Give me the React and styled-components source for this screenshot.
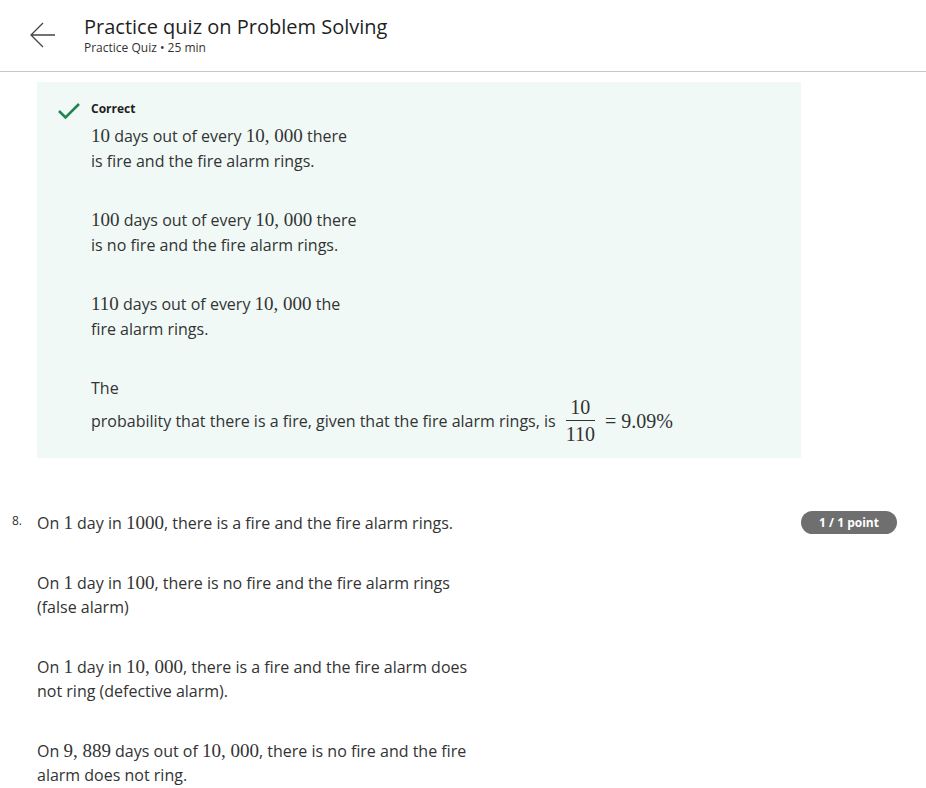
import React from 'react';
import styled, { createGlobalStyle } from 'styled-components';

const GlobalStyle = createGlobalStyle`
  body {
    margin: 0;
    background: #fff;
    font-family: "Open Sans", "Liberation Sans", sans-serif;
    color: #333;
  }
`;

const Header = styled.header`
  display: flex;
  align-items: center;
  height: 71px;
  border-bottom: 1px solid #c7c7c7;
  padding-left: 29px;
`;

const BackButton = styled.button`
  display: flex;
  align-items: center;
  justify-content: center;
  width: 28px;
  height: 28px;
  padding: 0;
  margin-top: -2px;
  border: none;
  background: none;
  cursor: pointer;
`;

const TitleBlock = styled.div`
  margin-left: 27px;
  margin-top: -3px;
`;

const Title = styled.h1`
  margin: 0;
  font-size: 20px;
  font-weight: 400;
  line-height: 28px;
  color: #1f1f1f;
`;

const Subtitle = styled.div`
  font-size: 12px;
  line-height: 16px;
  margin-top: -1px;
  color: #333;
`;

const Main = styled.main`
  padding: 10px 29px 0 12px;
`;

const Feedback = styled.section`
  display: flex;
  margin-left: 25px;
  width: 764px;
  box-sizing: border-box;
  padding: 19px 20px 13px 20px;
  background: #f0f9f6;
`;

const IconCol = styled.div`
  width: 34px;
  flex: none;
`;

const Body = styled.div`
  flex: 1;
`;

const Label = styled.div`
  font-size: 12px;
  font-weight: 700;
  line-height: 16px;
  margin-bottom: 7px;
  color: #1f1f1f;
`;

const Para = styled.p`
  margin: 0 0 ${({ gap }) => gap ?? 34}px;
  font-size: 16px;
  line-height: ${({ lh }) => lh ?? 25}px;
  width: ${({ width }) => width || 'auto'};
`;

const M = styled.span`
  font-family: "Liberation Serif", "DejaVu Serif", serif;
  font-size: ${({ size }) => size || 19}px;
  line-height: 1;
`;

const FracLine = styled.div`
  display: flex;
  align-items: center;
  margin-top: -4px;
  font-size: 16px;
  line-height: 24px;
`;

const Frac = styled.span`
  display: inline-flex;
  flex-direction: column;
  align-items: center;
  margin: 0 10px;
  font-family: "Liberation Serif", "DejaVu Serif", serif;
  font-size: 20px;
  line-height: 21px;
`;

const Num = styled.span`
  padding: 0 2px 2px;
  border-bottom: 1px solid #333;
  align-self: stretch;
  text-align: center;
`;

const Den = styled.span`
  padding-top: 3px;
`;

const Question = styled.div`
  display: grid;
  grid-template-columns: 25px 1fr auto;
  margin-top: 53px;
`;

const QNum = styled.div`
  font-size: 12px;
  line-height: 24px;
  margin-top: -2px;
`;

const Badge = styled.span`
  align-self: start;
  display: inline-flex;
  align-items: center;
  justify-content: center;
  width: 96px;
  height: 23px;
  border-radius: 12px;
  background: #6f6f6f;
  color: #fff;
  font-size: 12px;
  font-weight: 700;
`;

const Arrow = () => (
  <svg width="28" height="28" viewBox="0 0 28 28" fill="none" stroke="#444" strokeWidth="1.3">
    <path d="M26 14H3M14 2L2 14l12 12" />
  </svg>
);

const Check = () => (
  <svg width="24" height="20" viewBox="0 0 24 20" fill="none" stroke="#1f8354" strokeWidth="2.6">
    <path d="M2 10l6.5 6.5L22 3" />
  </svg>
);

const App = () => (
  <>
    <GlobalStyle />
    <Header>
      <BackButton aria-label="Back">
        <Arrow />
      </BackButton>
      <TitleBlock>
        <Title>Practice quiz on Problem Solving</Title>
        <Subtitle>Practice Quiz • 25 min</Subtitle>
      </TitleBlock>
    </Header>
    <Main>
      <Feedback>
        <IconCol>
          <Check />
        </IconCol>
        <Body>
          <Label>Correct</Label>
          <Para width="265px">
            <M>10</M> days out of every <M>10, 000</M> there is fire and the fire alarm rings.
          </Para>
          <Para width="275px">
            <M>100</M> days out of every <M>10, 000</M> there is no fire and the fire alarm rings.
          </Para>
          <Para width="260px">
            <M>110</M> days out of every <M>10, 000</M> the fire alarm rings.
          </Para>
          <Para gap={0}>The</Para>
          <FracLine>
            probability that there is a fire, given that the fire alarm rings, is
            <Frac>
              <Num>10</Num>
              <Den>110</Den>
            </Frac>
            <M size={20}>= 9.09%</M>
          </FracLine>
        </Body>
      </Feedback>
      <Question>
        <QNum>8.</QNum>
        <div>
          <Para lh={24} gap={36}>
            On <M>1</M> day in <M>1000</M>, there is a fire and the fire alarm rings.
          </Para>
          <Para lh={24} gap={36} width="440px">
            On <M>1</M> day in <M>100</M>, there is no fire and the fire alarm rings (false alarm)
          </Para>
          <Para lh={24} gap={36} width="440px">
            On <M>1</M> day in <M>10, 000</M>, there is a fire and the fire alarm does not ring (defective alarm).
          </Para>
          <Para lh={24} gap={0} width="440px">
            On <M>9, 889</M> days out of <M>10, 000</M>, there is no fire and the fire alarm does not ring.
          </Para>
        </div>
        <Badge>1 / 1 point</Badge>
      </Question>
    </Main>
  </>
);

export default App;
